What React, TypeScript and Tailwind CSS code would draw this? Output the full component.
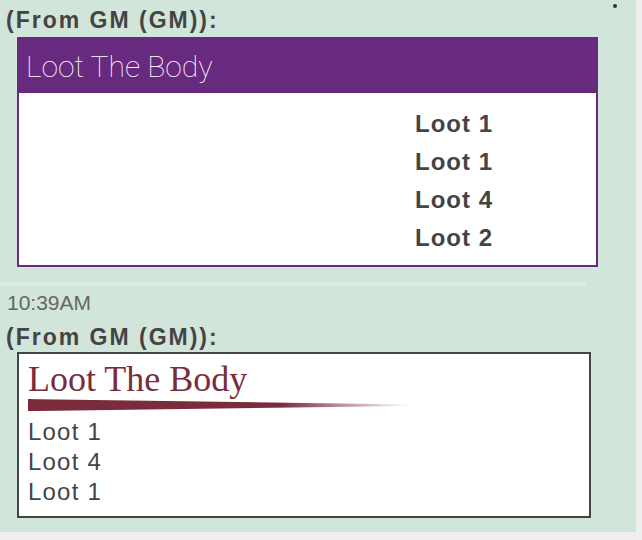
const sans = "font-['Liberation_Sans',Arial,sans-serif]";

const LootBar = () => (
  <svg width="382" height="12" viewBox="0 0 382 12" className="block">
    <defs>
      <linearGradient id="lootFade" x1="0" y1="0" x2="1" y2="0">
        <stop offset="0" stopColor="#7a2c3d" />
        <stop offset="0.66" stopColor="#7a2c3d" />
        <stop offset="1" stopColor="#7a2c3d" stopOpacity="0" />
      </linearGradient>
    </defs>
    <polygon points="0,0 11,0.2 382,5.5 382,7 11,12 0,12" fill="url(#lootFade)" />
  </svg>
);

export default function App() {
  const boldLoot = ['Loot 1', 'Loot 1', 'Loot 4', 'Loot 2'];
  const plainLoot = ['Loot 1', 'Loot 4', 'Loot 1'];

  return (
    <div className={`w-[642px] h-[540px] bg-[#efefef] ${sans}`}>
      <div className="relative w-[636px] h-[532px] bg-[#d1e5da] overflow-hidden">
        <span className="absolute left-[613px] top-[4px] w-[4px] h-[4px] rounded-full bg-[#333]" />

        {/* first message */}
        <div className="pt-[7px] pb-[15px]">
          <div className="pl-[6px] text-[23px] leading-[26px] font-bold tracking-[2px] text-[#444]">
            (From GM (GM)):
          </div>
          <div className="mt-[4px] ml-[17px] w-[581px] border-2 border-[#672a7e] bg-white">
            <div className="flex items-center h-[54px] pl-[7px] pt-[1px] bg-[#672a7e] text-white font-['Roboto',sans-serif] font-thin text-[30px]">
              Loot The Body
            </div>
            <div className="flex flex-col pl-[396px] pt-[12px] h-[172px]">
              {boldLoot.map((item, i) => (
                <div key={i} className="text-[24px] leading-[38px] font-bold tracking-[1px] text-[#444]">
                  {item}
                </div>
              ))}
            </div>
          </div>
        </div>

        <div className="w-[586px] h-[4px] bg-[#dbeae2]" />

        {/* second message */}
        <div className="pt-[5px]">
          <div className="pl-[7px] text-[21px] leading-[24px] text-[#666]">10:39AM</div>
          <div className="mt-[9px] pl-[6px] text-[23px] leading-[26px] font-bold tracking-[2px] text-[#444]">
            (From GM (GM)):
          </div>
          <div className="mt-[2px] ml-[17px] w-[574px] h-[166px] border-2 border-[#444] bg-white pl-[9px] pt-[6px]">
            <div className="font-['Liberation_Serif','Times_New_Roman',serif] text-[36px] leading-[38px] text-[#7a2c3d]">
              Loot The Body
            </div>
            <div className="mt-[1px]">
              <LootBar />
            </div>
            <div className="mt-[6px]">
              {plainLoot.map((item, i) => (
                <div key={i} className="text-[24px] leading-[30px] tracking-[1.2px] text-[#444]">
                  {item}
                </div>
              ))}
            </div>
          </div>
        </div>
      </div>
    </div>
  );
}
